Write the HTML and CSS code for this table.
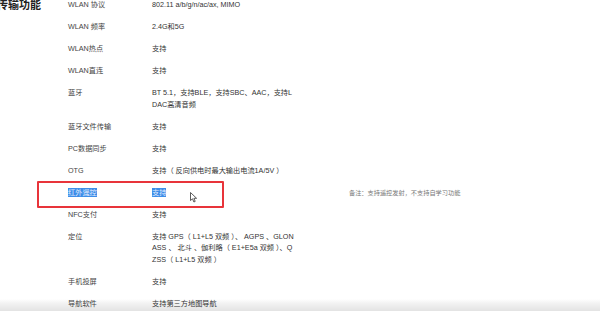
FILE: index.html
```html
<!DOCTYPE html>
<html lang="zh-CN">
<head>
<meta charset="utf-8">
<link rel="stylesheet" href="styles.css">
</head>
<body>
<div class="page">
  <h2 class="section-title">传输功能</h2>
  <div class="spec-list">
    <div class="row"><div class="label">WLAN 协议</div><div class="value">802.11 a/b/g/n/ac/ax, MIMO</div></div>
    <div class="row"><div class="label">WLAN 频率</div><div class="value">2.4G和5G</div></div>
    <div class="row"><div class="label">WLAN热点</div><div class="value">支持</div></div>
    <div class="row"><div class="label">WLAN直连</div><div class="value">支持</div></div>
    <div class="row"><div class="label">蓝牙</div><div class="value">BT 5.1，支持BLE，支持SBC、AAC，支持LDAC高清音频</div></div>
    <div class="row"><div class="label">蓝牙文件传输</div><div class="value">支持</div></div>
    <div class="row"><div class="label">PC数据同步</div><div class="value">支持</div></div>
    <div class="row"><div class="label">OTG</div><div class="value">支持（ 反向供电时最大输出电流1A/5V ）</div></div>
    <div class="row marked">
      <div class="label"><span class="sel">红外遥控</span></div>
      <div class="value"><span class="sel">支持</span></div>
      <div class="note">备注：支持遥控发射，不支持自学习功能</div>
      <div class="redbox"></div>
      <svg class="cursor" width="8" height="11" viewBox="0 0 8 11"><path d="M0.5 0.5 L0.5 8.5 L2.5 6.8 L3.9 10 L5.2 9.4 L3.9 6.3 L6.6 6.3 Z" fill="#fff" stroke="#333" stroke-width="0.8" stroke-linejoin="round"/></svg>
    </div>
    <div class="row"><div class="label">NFC支付</div><div class="value">支持</div></div>
    <div class="row"><div class="label">定位</div><div class="value">支持 GPS（ L1+L5 双频 ）、 AGPS 、GLONASS 、 北斗 、伽利略（ E1+E5a 双频 ）、Q&#8203;ZSS（ L1+L5 双频 ）</div></div>
    <div class="row"><div class="label">手机投屏</div><div class="value">支持</div></div>
    <div class="row"><div class="label">导航软件</div><div class="value">支持第三方地图导航</div></div>
  </div>
</div>
</body>
</html>
```

FILE: styles.css
```css
html {
  background: linear-gradient(to bottom, #ffffff 0, #ffffff 299px, #f3f3f3 303px, #e3e3e3 311px);
  height: 311px;
  overflow: hidden;
}
body {
  margin: 0;
  width: 600px;
  height: 311px;
  overflow: hidden;
  font-family: "Liberation Sans", "Noto Sans CJK SC", sans-serif;
  color: #333;
}
.page {
  display: flex;
  align-items: flex-start;
}
.section-title {
  margin: -2px 0 0 -3px;
  width: 71px;
  flex: none;
  font-size: 11px;
  line-height: 14px;
  font-weight: bold;
  color: #222;
}
.spec-list {
  display: flex;
  flex-direction: column;
  margin-top: -6px;
}
.row {
  position: relative;
  display: flex;
  padding: 5.25px 0;
  font-size: 7.2px;
  line-height: 11.5px;
}
.label {
  width: 84px;
  flex: none;
  color: #444;
}
.value {
  width: 144px;
  flex: none;
  word-break: break-all;
}
.note {
  margin-left: 53px;
  font-size: 6.2px;
  color: #777;
}
.sel {
  background: #3d8de8;
  color: #e4eeff;
}
.redbox {
  position: absolute;
  left: -31px;
  top: -1px;
  width: 183px;
  height: 23px;
  border: 2px solid #e8343a;
  border-radius: 1px;
}
.cursor {
  position: absolute;
  left: 122px;
  top: 10px;
}
```
